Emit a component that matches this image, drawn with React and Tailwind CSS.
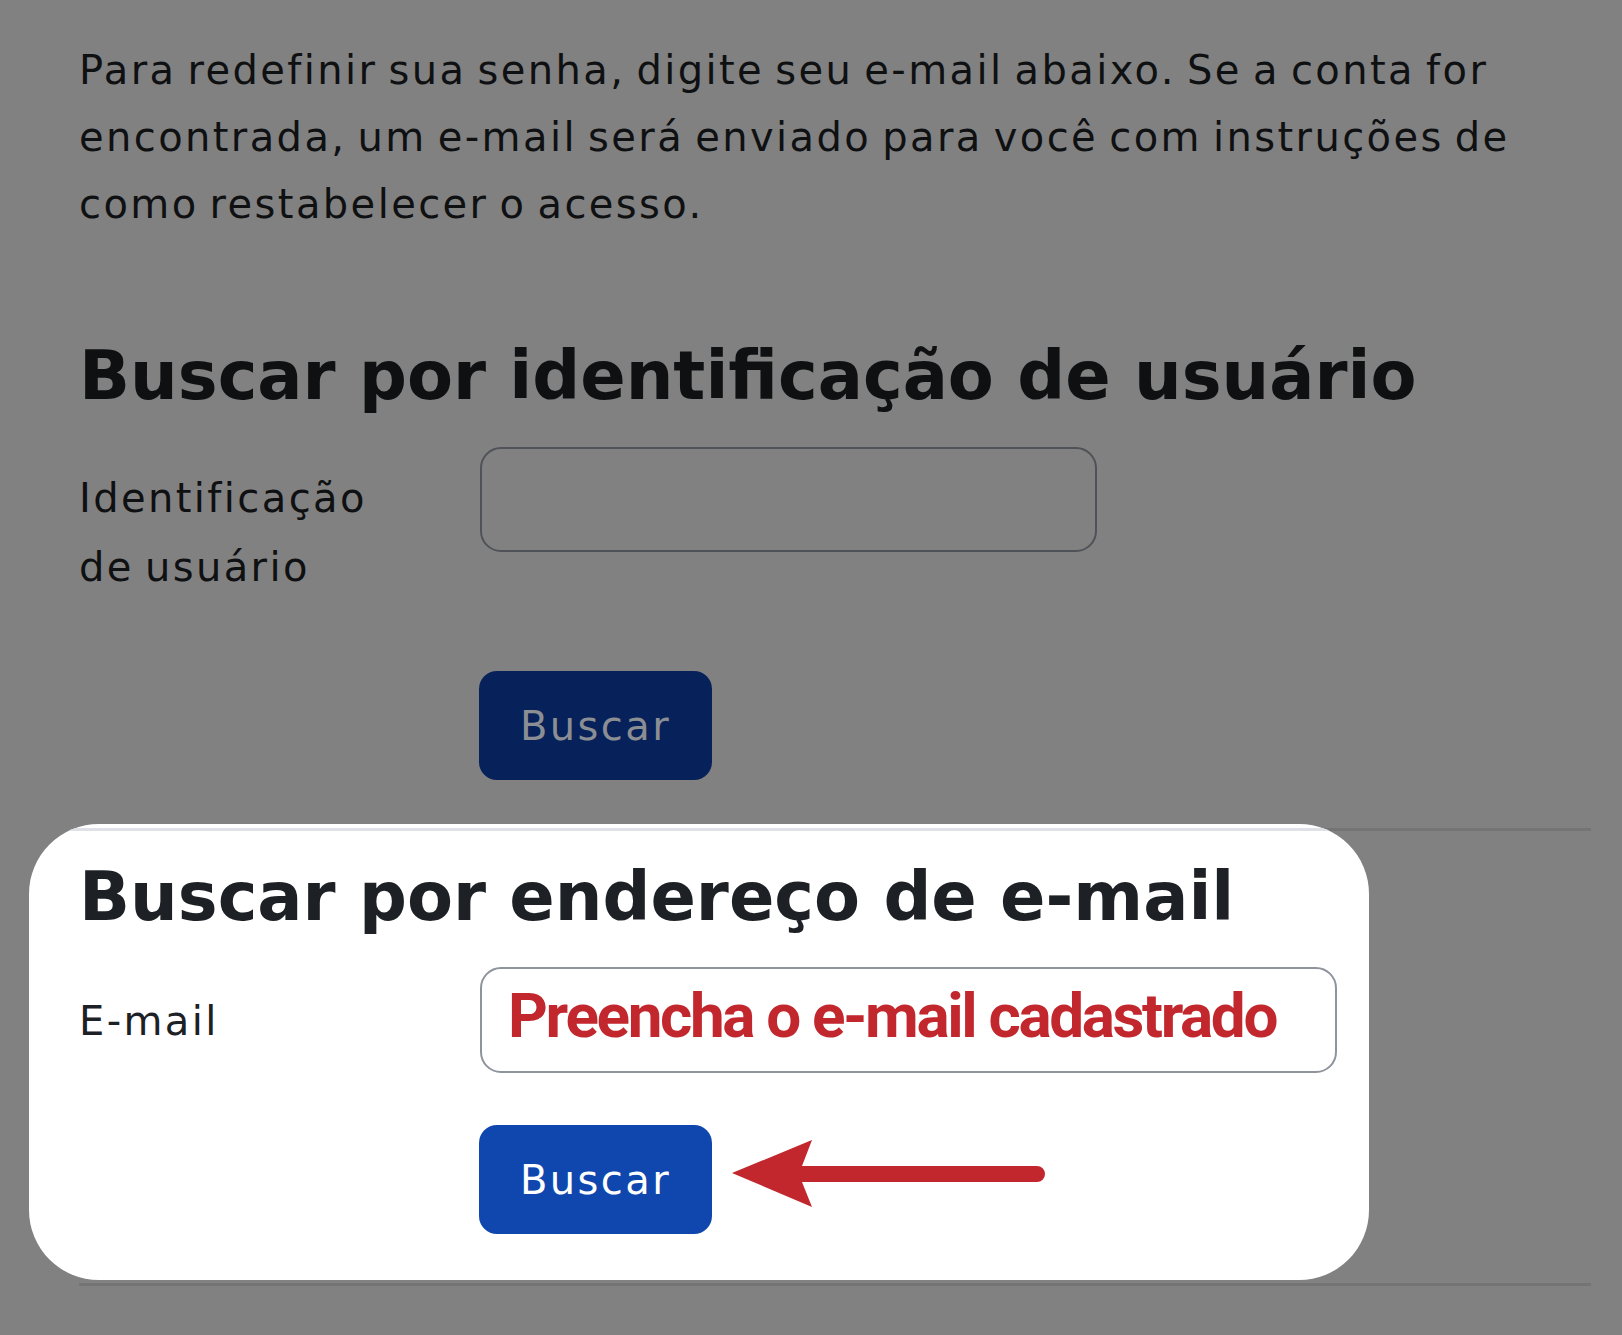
export default function App() {
  return (
    <div className="min-h-screen w-full overflow-hidden bg-[#818181] font-['DejaVu_Sans',sans-serif]">
      <div className="pl-[79px] pr-[31px] pt-[37px]">
        <p className="text-[40px] leading-[67px] tracking-[0.06em] text-[#0f1012] [word-spacing:-0.1em]">
          Para redefinir sua senha, digite seu e-mail abaixo. Se a conta for encontrada, um e-mail será enviado para você com instruções de como restabelecer o acesso.
        </p>

        {/* busca por usuário (escurecida) */}
        <h2 className="mt-[96px] text-[67px] font-bold leading-[84px] text-[#0e1012]">
          Buscar por identificação de usuário
        </h2>
        <div className="mt-[29px] flex items-start">
          <label className="mr-[81px] w-[320px] pt-[17px] text-[40px] leading-[69px] tracking-[0.06em] text-[#0f1012] [word-spacing:-0.1em]">
            Identificação de usuário
          </label>
          <input
            type="text"
            className="h-[105px] w-[617px] rounded-[21px] border-2 border-[#4f5257] bg-transparent outline-none"
          />
        </div>
        <div className="mt-[69px] pl-[400px]">
          <button
            type="button"
            className="h-[109px] w-[233px] rounded-[18px] bg-[#07215a] text-[40px] tracking-[0.06em] text-[#8b8e93]"
          >
            Buscar
          </button>
        </div>

        <div className="mt-[48px] h-[3px] w-full bg-[#747474]"></div>

        {/* destaque: busca por e-mail */}
        <div className="relative -ml-[50px] -mt-[7px] h-[456px] w-[1340px] overflow-hidden rounded-[70px] bg-white pl-[50px] pt-[31px]">
          <div className="absolute left-0 right-0 top-[4px] h-[3px] bg-[#dee2e6]"></div>
          <h2 className="text-[67px] font-bold leading-[84px] text-[#1d2125]">
            Buscar por endereço de e-mail
          </h2>
          <div className="mt-[28px] flex items-start">
            <label className="w-[401px] pt-[20px] text-[40px] leading-[69px] tracking-[0.06em] text-[#1d2125]">
              E-mail
            </label>
            <div className="flex h-[106px] w-[857px] items-center rounded-[21px] border-2 border-[#8e949c] pl-[26px]">
              <span className="-mt-[10px] whitespace-nowrap font-['Roboto',sans-serif] text-[62px] font-bold tracking-[-0.038em] text-[#c1272d]">
                Preencha o e-mail cadastrado
              </span>
            </div>
          </div>
          <div className="mt-[52px] flex items-center pl-[400px]">
            <button
              type="button"
              className="h-[109px] w-[233px] rounded-[18px] bg-[#1047ae] text-[40px] tracking-[0.06em] text-white"
            >
              Buscar
            </button>
            <svg
              width="313"
              height="69"
              viewBox="0 0 313 69"
              className="-mt-[12px] ml-[20px]"
            >
              <path
                d="M0 34 L80 1 L70 27 L305 27 A8 8 0 0 1 305 43 L70 43 L80 68 Z"
                fill="#c1272d"
              />
            </svg>
          </div>
        </div>

        <div className="mt-[3px] h-[3px] w-full bg-[#747474]"></div>
      </div>
    </div>
  );
}
